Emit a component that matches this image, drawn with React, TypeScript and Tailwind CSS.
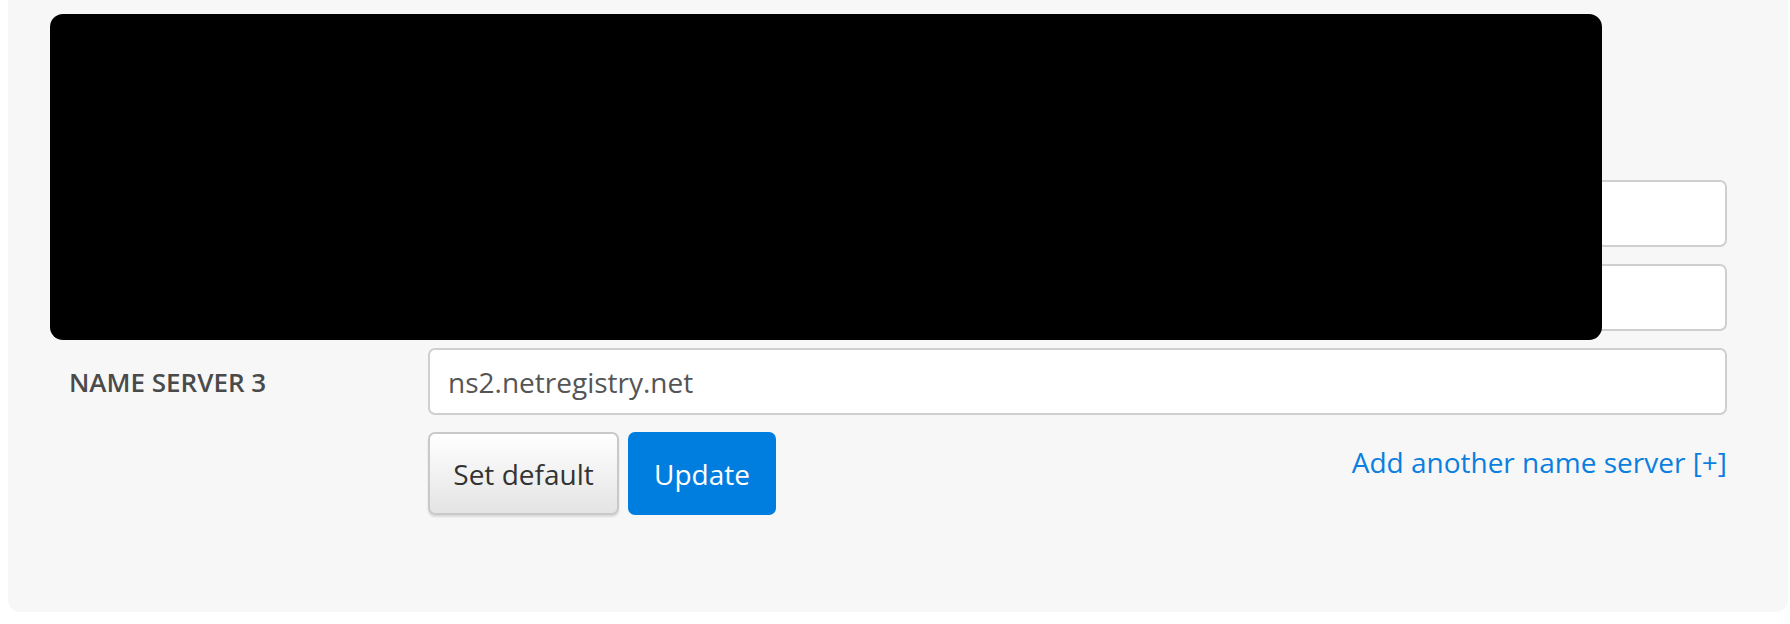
import React from 'react';

const servers = [
  { label: 'Name Server 1', value: '' },
  { label: 'Name Server 2', value: '' },
  { label: 'Name Server 3', value: 'ns2.netregistry.net' },
];

function ServerRow({ label, value }: { label: string; value: string }) {
  return (
    <div className="flex items-center">
      <label className="w-[359px] shrink-0 pt-[2px] text-[26px] font-semibold uppercase text-[#4a4a4a]">{label}</label>
      <input
        readOnly
        value={value}
        className="h-[67px] flex-1 rounded-[7px] border-2 border-[#cfcfcf] bg-white px-[18px] text-[28px] text-[#555] outline-none"
      />
    </div>
  );
}

export default function App() {
  return (
    <div className="min-h-screen bg-white font-['Open_Sans',sans-serif]">
      <div className="relative ml-[8px] mr-[2px] rounded-b-[12px] bg-[#f7f7f7] px-[61px] pt-[180px] pb-[97px]">
        <div className="flex flex-col gap-[17px]">
          {servers.map((s) => (
            <ServerRow key={s.label} label={s.label} value={s.value} />
          ))}

          <div className="flex pl-[359px]">
            <div className="flex flex-1 items-start justify-between">
              <div className="flex gap-[9px]">
                <button className="h-[83px] w-[191px] rounded-[7px] border-2 border-[#c9c9c9] bg-gradient-to-b from-white to-[#e4e4e4] text-[28px] text-[#333] shadow-[0_2px_2px_rgba(0,0,0,0.12)]">
                  Set default
                </button>
                <button className="h-[83px] w-[148px] rounded-[7px] bg-[#007ee0] text-[28px] text-white">
                  Update
                </button>
              </div>
              <a href="#" className="mt-[10px] text-[28px] leading-[40px] text-[#0a7fe0]">
                Add another name server [+]
              </a>
            </div>
          </div>
        </div>

        {/* redaction block */}
        <div className="absolute left-[42px] top-[14px] h-[326px] w-[1552px] rounded-[13px] bg-black" />
      </div>
    </div>
  );
}
